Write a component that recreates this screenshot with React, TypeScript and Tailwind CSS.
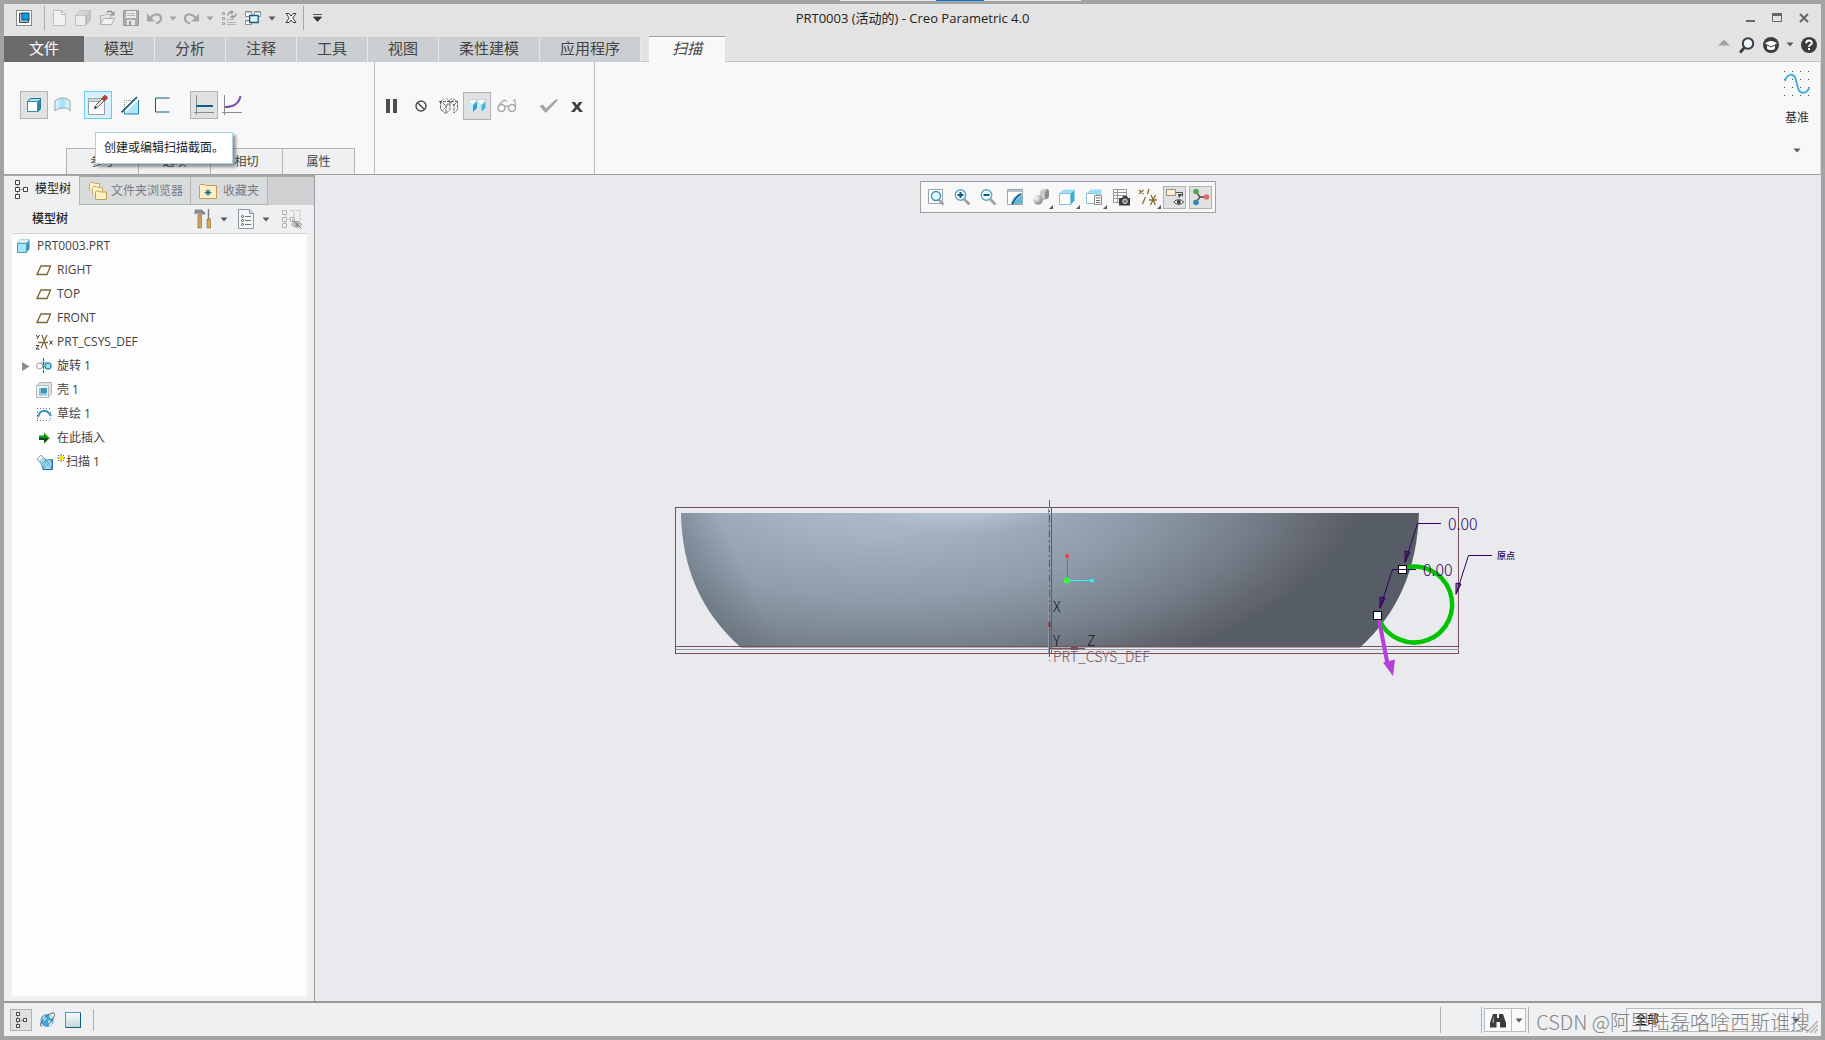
import React, { ReactNode } from 'react';
import clsx from 'clsx';

interface GlyphProps {
  w?: number;
  h?: number;
  children: ReactNode;
}

function Glyph({ w = 16, h = 16, children }: GlyphProps) {
  return (
    <svg width={w} height={h} viewBox={`0 0 ${w} ${h}`} fill="none" className="block shrink-0" aria-hidden="true">
      {children}
    </svg>
  );
}

function Caret({ color = '#5a5a5a' }: { color?: string }) {
  return (
    <Glyph w={8} h={5}>
      <path d="M0.5 0.5h7L4 4.5z" fill={color} />
    </Glyph>
  );
}

/* ---------- quick access icons ---------- */

const LogoIcon = () => (
  <Glyph>
    <rect x=".5" y=".5" width="15" height="15" fill="#fff" stroke="#8a8a8a" />
    <path d="M3.5 3.5h9v9h-9z" fill="#a9c6dc" stroke="#444" />
    <rect x="6" y="3" width="7" height="7" fill="#0b9ae6" stroke="#1a4c70" />
  </Glyph>
);

const NewIcon = () => (
  <Glyph>
    <path d="M2.5.5h8l4 4v11h-12z" fill="#f2f2f2" stroke="#bdbdbd" />
    <path d="M10.500.5v4h4" stroke="#bdbdbd" />
  </Glyph>
);

const PartIcon = () => (
  <Glyph>
    <path d="M6.500.5h9v9l-4 5v-9h-8z" fill="#c4c4c4" stroke="#bababa" />
    <path d="M.5 5.500h10v10H.5z" fill="#ededed" stroke="#c2c2c2" />
    <path d="M.5 5.500l5-5h10l-5 5z" fill="#d4d4d4" stroke="#c2c2c2" />
  </Glyph>
);

const OpenIcon = () => (
  <Glyph>
    <path d="M1.500 14.500v-9h4l1-1h5v4" fill="#e4e4e4" stroke="#b0b0b0" />
    <path d="M1.500 14.500l3-6h11l-3 6z" fill="#f1f1f1" stroke="#b0b0b0" />
    <path d="M8 2.500c2-2 4-1.500 5.500.5" stroke="#909090" strokeWidth="1.400" />
    <path d="M15.500 1v4.500H11z" fill="#909090" />
  </Glyph>
);

const SaveIcon = () => (
  <Glyph>
    <path d="M.5.5h15v15H.5z" fill="#acacac" stroke="#9a9a9a" />
    <path d="M3 1h10v7H3z" fill="#ececec" />
    <path d="M4 3.500h8M4 5.500h8" stroke="#b5b5b5" />
    <path d="M4 10h8v5H4z" fill="#e9e9e9" />
    <path d="M6 11h2v4H6z" fill="#9a9a9a" />
  </Glyph>
);

const UndoIcon = () => (
  <Glyph>
    <path d="M2.500 9C6 3.500 13 3 14 7.500c.5 3-2 5-5 6" stroke="#a6a6a6" strokeWidth="2.200" />
    <path d="M0 3.500v8h8z" fill="#a6a6a6" />
  </Glyph>
);

const RedoIcon = () => (
  <Glyph>
    <path d="M13.500 9C10 3.500 3 3 2 7.500c-.5 3 2 5 5 6" stroke="#a6a6a6" strokeWidth="2.200" />
    <path d="M16 3.500v8H8z" fill="#a6a6a6" />
  </Glyph>
);

const RegenIcon = () => (
  <Glyph>
    <path d="M1.500 2.500h2v2h-2zM1.500 7.500h2v2h-2zM1.500 12.500h2v2h-2z" stroke="#a0a0a0" />
    <path d="M6 9.500h7M6 12.500h9M6 14.500h9" stroke="#b4b4b4" />
    <path d="M7 5.500c0-3 2-3.500 4-3.500M15 3.500c0 3-2 3.500-4 3.500" stroke="#979797" strokeWidth="1.500" />
    <path d="M10 0l3 2-3 2.500zM12 4.500l-3 2.500 3 2z" fill="#979797" />
  </Glyph>
);

const WindowsIcon = () => (
  <Glyph>
    <path d="M.5 1.500h6v5h-6zM9.500 1.500h6v5h-6zM.5 10.500h6v4h-6z" fill="#fff" stroke="#909090" />
    <path d="M.5 2h6M9.500 2h6M.5 11h6" stroke="#8a8a8a" />
    <path d="M4.700 5.500h8.500v7H4.700z" fill="#dff4fc" stroke="#17607f" strokeWidth="1.300" />
  </Glyph>
);

const CloseDocIcon = () => (
  <Glyph w={12} h={12}>
    <path d="M1 1.500h3l2 2.500 2-2.500h3L7.700 6l3.300 4.500H8L6 8l-2 2.500H1L4.300 6z" fill="#fff" stroke="#3a3a3a" />
  </Glyph>
);

/* ---------- dashboard icons ---------- */

const SolidIcon = () => (
  <Glyph>
    <path d="M12 4l3-3v11l-3 3z" fill="#2b86ab" />
    <path d="M1 4l3-3h11l-3 3z" fill="#a9e0f6" />
    <path d="M1.500 4.500h10v10h-10z" fill="#fff" stroke="#3a87a6" />
    <path d="M1.500 4.500l3-3h10v10l-3 3" stroke="#2b7492" />
  </Glyph>
);

const SurfaceIcon = () => (
  <Glyph w={17}>
    <path d="M1 4c4-4 11-4 15 0v10c-2-3-4-3-6-3s-6 0-9 3z" fill="url(#surf)" stroke="#8fa5b0" />
    <defs>
      <linearGradient id="surf">
        <stop stopColor="#e4f7fd" />
        <stop offset=".5" stopColor="#a5ddf3" />
        <stop offset="1" stopColor="#eaf9fe" />
      </linearGradient>
    </defs>
  </Glyph>
);

const SketchIcon = () => (
  <Glyph w={20} h={20}>
    <path d="M.5 3.500h16v16H.5z" fill="#fff" stroke="#9c9c9c" />
    <path d="M.5 3.500h16v3H.5z" fill="#d6d6d6" stroke="#a8a8a8" />
    <path d="M6.500 13.500l2-4 6-6 2 2-6 6z" fill="#e4e4e4" stroke="#5b5b5b" />
    <path d="M6 14l1-3 2 2z" fill="#333" />
    <path d="M13.500 3.500L16 .8c1.500-1 4 1 3 3L16.500 6z" fill="#b5443a" stroke="#7e2c24" strokeWidth=".6" />
  </Glyph>
);

const CutIcon = () => (
  <Glyph w={19} h={19}>
    <path d="M3.500 13V4.500H13" stroke="#8a8a8a" strokeDasharray="1 1" />
    <path d="M17.500 4v14h-14z" fill="#a8e6fb" />
    <path d="M3.500 15v3h14V4" stroke="#2c7fa0" />
    <path d="M.5 16.500L16 1" stroke="#17516b" strokeWidth="1.600" />
  </Glyph>
);

const ThinIcon = () => (
  <Glyph>
    <path d="M15.500 1H1.500v14h14" stroke="#0d5c82" />
  </Glyph>
);

const ConstantIcon = () => (
  <Glyph w={20} h={20}>
    <path d="M2.500 0v20M0 17.500h20" stroke="#8b8b8b" />
    <path d="M2 11h17" stroke="#0d5c82" strokeWidth="2" />
  </Glyph>
);

const VariableIcon = () => (
  <Glyph w={20} h={20}>
    <path d="M2.500 0v20M0 17.500h20" stroke="#8b8b8b" />
    <path d="M3 12c9 0 14-3 15.500-11" stroke="#7e4fae" strokeWidth="2" />
  </Glyph>
);

const PauseIcon = () => (
  <Glyph w={12} h={14}>
    <path d="M1 0h4v14H1zM8 0h4v14H8z" fill="#4d4d4d" />
  </Glyph>
);

const StopIcon = () => (
  <Glyph w={12} h={12}>
    <circle cx="6" cy="6" r="5" stroke="#505050" strokeWidth="1.500" />
    <path d="M2.500 2.500l7 7" stroke="#505050" strokeWidth="1.500" />
  </Glyph>
);

const WireIcon = () => (
  <Glyph w={20} h={16}>
    <path d="M1.500 3.500v8l5.500 4v-8zM7 7.500l4-4v8l-4 4M11 3.500l4 3.500v8M15 7l3.500-3.500v8L15 15M0 3.500h20" stroke="#4a4a4a" strokeWidth=".9" strokeDasharray="3 1" />
    <path d="M2 3L5 .5M7 .5l4 3M9 3.500L13 .5M14 .5l4.500 3M3 13L15 1" stroke="#777" strokeWidth=".7" />
  </Glyph>
);

const AttachedIcon = () => (
  <Glyph w={20} h={14}>
    <path d="M1 2.500l3-2h6L6 6z" fill="#fff" stroke="#a9b8c0" strokeWidth=".6" />
    <path d="M.8 2.500L6 6.500V13L.8 9z" fill="#c9eefb" />
    <path d="M6 6.500l4-4V9l-4 4z" fill="#2d9fd0" />
    <path d="M10 2.500l3-2h6L14.500 6z" fill="#fff" stroke="#a9b8c0" strokeWidth=".6" />
    <path d="M10.500 3l4 3.500V12l-4-3z" fill="#c9eefb" />
    <path d="M14.500 6.500l4-4V9l-4 3.500z" fill="#3fb4e3" />
  </Glyph>
);

const GlassesIcon = () => (
  <Glyph w={20} h={14}>
    <circle cx="4.500" cy="9" r="3.500" stroke="#a8a8a8" strokeWidth="1.500" />
    <circle cx="15" cy="9" r="3.500" stroke="#a8a8a8" strokeWidth="1.500" />
    <path d="M8 8c1-1.500 2.500-1.500 3.500 0M1.200 7.500C3 5 6 1.500 7.500 1.200S9 2 9.500 3M18.500 8.500L18 1l-2 .5" stroke="#a8a8a8" strokeWidth="1.200" />
  </Glyph>
);

const AcceptIcon = () => (
  <Glyph w={20} h={14}>
    <path d="M.5 7L4 5.500l3 4L16.500.5h3L7.500 13.500H6z" fill="#a5a5a5" />
  </Glyph>
);

const CancelIcon = () => (
  <Glyph w={12} h={10}>
    <path d="M.5 0h3.500l2 3 2-3h3.500L8 5l4 5H8.500L6 7l-2.500 3H0l4-5z" fill="#424242" />
  </Glyph>
);

const DatumIcon = () => (
  <Glyph w={26} h={26}>
    {[0, 8, 16, 24].map((y) =>
      [0, 8, 16, 24].map((x) => <rect key={`${x}-${y}`} x={x} y={y} width="1" height="1" fill="#444" />)
    )}
    <path d="M1 10C3 2.500 10 1.500 12 9l2 8c2 7 9 6 11.500-1" stroke="#43b0df" strokeWidth="2" />
  </Glyph>
);

/* ---------- navigator icons ---------- */

const TreeIcon = ({ color = '#3f3f3f' }: { color?: string }) => (
  <Glyph w={14} h={20}>
    <path d="M3.500 5v10M5 10.500h5" stroke="#9a9a9a" />
    <path d="M1.500 1.500h4v4h-4zM1.500 8.500h4v4h-4zM1.500 15.500h4v4h-4zM9.500 8.500h4v4h-4z" fill="#fff" stroke={color} />
  </Glyph>
);

const SmallTreeIcon = () => (
  <Glyph w={12} h={16}>
    <path d="M2.500 4v9M4 8.500h4" stroke="#9a9a9a" />
    <path d="M1.500.5h3v3h-3zM1.500 6.500h3v3h-3zM1.500 12.500h3v3h-3zM8.500 6.500h3v3h-3z" fill="#fff" stroke="#3f3f3f" />
  </Glyph>
);

const FoldersIcon = () => (
  <Glyph w={20} h={20}>
    <path d="M1.500 10V2.500l1-1h3l1 1h5V8" fill="#fff0c8" stroke="#c9a765" />
    <path d="M4.500 14V6.500l1-1h3l1 1h5V12" fill="#fff0c8" stroke="#c9a765" />
    <path d="M7.500 18.500V11l1-1h3l1 1h6v7.500z" fill="#ffefc4" stroke="#c29d57" />
  </Glyph>
);

const FavoritesIcon = () => (
  <Glyph w={18} h={16}>
    <path d="M.5 15.500v-13l1-1h4l1 1h11v13z" fill="#fff0c8" stroke="#c29d57" />
    <path d="M9 6v7M6.500 7l5 5M11.500 7l-5 5M5.500 9.500h7" stroke="#15617f" strokeWidth=".9" />
    <circle cx="9" cy="9.500" r="1.500" fill="#15617f" />
  </Glyph>
);

const ToolsIcon = () => (
  <Glyph w={18} h={20}>
    <path d="M1 1h7l3 3v1H8V4H3L1 5z" fill="#8e959c" stroke="#5d646b" strokeWidth=".6" />
    <path d="M4 5h3.500v14H4z" fill="#cfa05e" stroke="#8d6630" strokeWidth=".6" />
    <path d="M14.500 0v10" stroke="#7b7b7b" strokeWidth="1.400" />
    <path d="M13 10h3.500v9H13z" fill="#dba74f" stroke="#8d6630" strokeWidth=".6" />
  </Glyph>
);

const SettingsListIcon = () => (
  <Glyph w={16} h={20}>
    <path d="M.5.5h11l4 4v15H.5z" fill="#f2f7f8" stroke="#8d979b" />
    <path d="M11.500.5v4h4" fill="#d0dadd" stroke="#8d979b" />
    <path d="M7 7.500h6M7 11.500h6M7 15.500h6" stroke="#777" />
    <circle cx="4.500" cy="7.500" r="1" stroke="#555" />
    <circle cx="4.500" cy="11.500" r="1" stroke="#555" />
    <circle cx="4.500" cy="15.500" r="1" stroke="#555" />
  </Glyph>
);

const HideTreeIcon = () => (
  <Glyph w={20} h={20}>
    <path d="M3 5v10M5 10h8M8 1.500h4v8M14 1.500h4v10" stroke="#c8c8c8" />
    <path d="M.5 1.500h4v4h-4zM.5 8.500h4v4h-4zM.5 14.500h4v4h-4zM8.500 8.500h4v4h-4z" fill="#eef0f2" stroke="#b5b5b5" />
    <path d="M10 15.500c2.500-4 7-4 9.500 0-2.500 3.500-7 3.500-9.500 0z" fill="#d6d6d6" stroke="#8c8c8c" />
    <circle cx="15" cy="15.500" r="1.800" fill="#8c8c8c" />
    <path d="M10 10.500l9.500 9" stroke="#7e7e7e" />
  </Glyph>
);

const RootIcon = () => (
  <Glyph>
    <path d="M10.500 5l3-3.500V11l-3 3.500z" fill="#2b93c4" />
    <path d="M1.500 5L4 1.500h9.500l-3 3.500z" fill="#dff5fd" stroke="#8fb8c8" strokeWidth=".6" />
    <path d="M1.500 5.500h9v9h-9z" fill="#a6e6fb" stroke="#4e9cbb" />
  </Glyph>
);

const PlaneIcon = () => (
  <Glyph>
    <path d="M5 4h9.500L11 12.500H1z" stroke="#7a6534" strokeWidth="1.300" />
  </Glyph>
);

const CsysIcon = () => (
  <Glyph w={17}>
    <path d="M2 8.500h10M6 1l5 14M11 1L5 14" stroke="#856c38" strokeWidth="1.300" />
    <path d="M0 1l1.500 2M3.500 1L1 5M0 11.500h3L0 15h3.500M13.500 6.500l3 4M16.500 6.500l-3 4" stroke="#333" />
  </Glyph>
);

const RevolveIcon = () => (
  <Glyph>
    <path d="M3 5c2-3 8-3 9 0v3H3z" fill="#b9d9e6" />
    <circle cx="3.500" cy="8" r="3" fill="#fff" stroke="#9c9c9c" />
    <circle cx="12" cy="8" r="3" fill="#a4e0f6" stroke="#3294bd" strokeWidth="1.400" />
    <path d="M7.500 0v16" stroke="#4d4d4d" strokeDasharray="3 1" />
  </Glyph>
);

const ShellIcon = () => (
  <Glyph>
    <path d="M.5 4l3-3.500h12v11l-3 4H.5z" fill="#dfe5e8" stroke="#aab3b7" />
    <path d="M.5 3.500h12v12H.5z" fill="#f0f4f5" stroke="#b5bcc0" />
    <path d="M3 6h8v7.500H3z" fill="#8cc8e0" />
    <path d="M5 6h6v5H5z" fill="#3e94b8" />
  </Glyph>
);

const CurveIcon = () => (
  <Glyph>
    <path d="M1 2.500h14M1 14.500h14M1.500 6v8M14.500 6v8" stroke="#777" strokeDasharray="1 2" />
    <path d="M2 11c2-8 9-8 13-1" stroke="#2c8ebb" strokeWidth="2" />
  </Glyph>
);

const InsertIcon = () => (
  <Glyph>
    <path d="M3 5.500h5V2.500l5.500 5.500L8 13.500V10H3z" fill="#0b9b12" />
    <path d="M3 8h10.500L8 13.500V10H3z" fill="#1e4420" />
    <path d="M8.500 3l5 5-5 5" stroke="#8ade3a" strokeWidth=".6" />
  </Glyph>
);

const SweepIcon = () => (
  <Glyph w={17}>
    <path d="M1 5l4-4 5 5 6.500-.5v10H7L5.500 10z" fill="#a7def2" stroke="#3f89a8" />
    <path d="M1 5l4-4 2.500 3L3.500 8z" fill="#f2f5f6" stroke="#aaa" />
    <path d="M16 5.500L7 15.500M16 15.500l-6-9.500-4.500 4M10 6L7 15" stroke="#4d99b8" strokeWidth=".8" />
    <path d="M16 6v9.500H7" stroke="#1b6688" />
  </Glyph>
);

/* ---------- graphics toolbar icons ---------- */

const RefitIcon = () => (
  <Glyph w={17} h={17}>
    <path d="M.5.5h14v14H.5z" fill="#fff" stroke="#9aa5aa" />
    <path d="M11 11l4.500 4.500" stroke="#a3a3a3" strokeWidth="2.500" />
    <circle cx="8" cy="7" r="4.500" fill="#e6f7fd" stroke="#3e8fb0" strokeWidth="1.400" />
  </Glyph>
);

const ZoomIcon = ({ plus = false }: { plus?: boolean }) => (
  <Glyph w={17} h={17}>
    <path d="M10 10l5.500 5.500" stroke="#a3a3a3" strokeWidth="2.800" />
    <circle cx="6.500" cy="6" r="5.200" fill="#f1fbfe" stroke="#5ca4c0" strokeWidth="1.400" />
    <path d="M3.500 6h6" stroke="#0d5c82" strokeWidth="2" />
    {plus && <path d="M6.500 3v6" stroke="#0d5c82" strokeWidth="2" />}
  </Glyph>
);

const RepaintIcon = () => (
  <Glyph>
    <path d="M.5.5h15v15H.5z" fill="#8fd6f1" stroke="#9aa9b0" />
    <path d="M1 3h14v1C9 5 5 9 4 15H1z" fill="#fff" />
    <path d="M1 1h14v2H1z" fill="#b8c3c8" />
    <path d="M15 6v9H5z" fill="#5db9dd" />
    <path d="M14 5c-4 1-6 5-9 10" stroke="#1b526b" strokeWidth="1.600" />
  </Glyph>
);

const ShadingIcon = () => (
  <Glyph>
    <defs>
      <radialGradient id="ball" cx=".3" cy=".3" r=".8">
        <stop stopColor="#fff" />
        <stop offset="1" stopColor="#7c7c7c" />
      </radialGradient>
    </defs>
    <path d="M7 3l4-3h4l1 2v6l-2 2-6 1z" fill="#8a8a8a" />
    <path d="M7 3l4-3h3l-2 4v7l-5-1z" fill="#c9c9c9" />
    <circle cx="5" cy="11" r="4.700" fill="url(#ball)" />
  </Glyph>
);

const OrientIcon = () => (
  <Glyph>
    <path d="M12 4l3.500-3.500v11L12 15.500z" fill="#3aa9d8" />
    <path d="M.5 4l4-3.500h11L12 4z" fill="#9fe0f7" />
    <path d="M.5 4.500h11v11H.5z" fill="#fff" stroke="#7dc0da" />
  </Glyph>
);

const ManagerIcon = () => (
  <Glyph>
    <path d="M.5 4.500l4-4h11v6H11" fill="#9adcf5" />
    <path d="M.5 4.500h10v10H.5z" fill="#fff" stroke="#8cc3d8" />
    <path d="M8.500 6.500h7v9h-7z" fill="#fff" stroke="#8c8c8c" />
    <path d="M10 9h4M10 11.500h4M10 13.500h4" stroke="#666" />
  </Glyph>
);

const CameraIcon = () => (
  <Glyph w={17} h={17}>
    <path d="M.5.5h13v13H.5zM.5 3.500h13M.5 6.500h13M.5 9.500h13M4.500.5v13" fill="#fff" stroke="#979797" />
    <path d="M6 9h3l1-2h4l1 2h2v7.500H6z" fill="#3e3e3e" />
    <circle cx="12" cy="12.300" r="2.300" fill="#777" stroke="#ddd" />
  </Glyph>
);

const DatumDisplayIcon = () => (
  <Glyph w={18} h={17}>
    <path d="M0 1l4.500 4M4.500 1L0 5M10 0L8.500 5M6.500 8L3.500 15M10 11h8M12 6l4.500 10M16.500 6l-5 10" stroke="#8a6b2e" strokeWidth="1.300" />
  </Glyph>
);

const AnnotationIcon = () => (
  <Glyph w={18} h={18}>
    <path d="M.5 1.500h9v6h-9z" fill="#fff1cf" stroke="#8f8f8f" />
    <path d="M10 4.500h6.500v4" stroke="#555" />
    <path d="M12 6h4.500l-3.500 4z" fill="#444" />
    <path d="M8 14c2-3 7.500-3 9.500 0-2 3-7.500 3-9.500 0z" fill="#fff" stroke="#3f3f3f" />
    <circle cx="12.800" cy="14" r="2" fill="#3f3f3f" />
  </Glyph>
);

const SpinCenterIcon = () => (
  <Glyph w={18} h={18}>
    <path d="M4 4l4 5-4 5M8 9h7" stroke="#444" strokeWidth="1.300" />
    <circle cx="4" cy="3.500" r="2.800" fill="#55a451" />
    <circle cx="4" cy="14.500" r="2.800" fill="#3587b2" />
    <circle cx="14.500" cy="9" r="2.800" fill="#e0706c" />
  </Glyph>
);

/* ---------- building blocks ---------- */

interface ToolButtonProps {
  label: string;
  className?: string;
  children: ReactNode;
}

function ToolButton({ label, className, children }: ToolButtonProps) {
  return (
    <button type="button" aria-label={label} className={clsx('flex shrink-0 items-center justify-center', className)}>
      {children}
    </button>
  );
}

const pressed = 'border border-[#b2b2b4] bg-[#e0e1e3]';

function TitleBar() {
  return (
    <header className="grid h-8 grid-cols-[1fr_auto_1fr] items-center pb-1">
      <div className="flex h-6 items-center">
        <ToolButton label="Creo" className="ml-3"><LogoIcon /></ToolButton>
        <span className="mr-[2px] ml-3 h-6 w-px bg-[#a8a8a8]" />
        <ToolButton label="新建" className="w-6"><NewIcon /></ToolButton>
        <ToolButton label="零件" className="w-6"><PartIcon /></ToolButton>
        <ToolButton label="打开" className="w-6"><OpenIcon /></ToolButton>
        <ToolButton label="保存" className="w-6"><SaveIcon /></ToolButton>
        <ToolButton label="撤消" className="w-6"><UndoIcon /></ToolButton>
        <ToolButton label="撤消列表" className="w-3"><Caret color="#a0a0a0" /></ToolButton>
        <ToolButton label="重做" className="w-6"><RedoIcon /></ToolButton>
        <ToolButton label="重做列表" className="w-[14px]"><Caret color="#a0a0a0" /></ToolButton>
        <ToolButton label="重新生成" className="w-6"><RegenIcon /></ToolButton>
        <ToolButton label="窗口" className="w-6"><WindowsIcon /></ToolButton>
        <ToolButton label="窗口列表" className="w-[14px]"><Caret /></ToolButton>
        <ToolButton label="关闭" className="w-6"><CloseDocIcon /></ToolButton>
        <span className="mr-[6px] h-6 w-px bg-[#a8a8a8]" />
        <ToolButton label="自定义" className="w-[14px]">
          <Glyph w={9} h={8}>
            <path d="M0 .5h9M.5 3h8L4.500 7.500z" stroke="#333" fill="#333" strokeWidth=".8" />
          </Glyph>
        </ToolButton>
      </div>
      <h1 className="text-[13px] leading-5 text-[#222]">PRT0003 (活动的) - Creo Parametric 4.0</h1>
      <div className="flex items-center justify-end gap-4 pr-3">
        <ToolButton label="最小化">
          <Glyph w={10} h={12}><path d="M0 9h9" stroke="#666" strokeWidth="2" /></Glyph>
        </ToolButton>
        <ToolButton label="最大化">
          <Glyph w={11} h={10}>
            <path d="M.5.5h9v8h-9z" stroke="#666" />
            <path d="M0 0h10v3H0z" fill="#666" />
          </Glyph>
        </ToolButton>
        <ToolButton label="关闭窗口">
          <Glyph w={10} h={10}><path d="M1 1l8 8M9 1L1 9" stroke="#666" strokeWidth="2" /></Glyph>
        </ToolButton>
      </div>
    </header>
  );
}

const ribbonTabs = ['模型', '分析', '注释', '工具', '视图', '柔性建模', '应用程序'];

function RibbonTabs() {
  return (
    <nav className="flex h-[26px] items-stretch text-[15px] leading-5 text-[#444]">
      <button type="button" className="bg-[#6a6a6a] px-[25px] pb-[3px] text-white">文件</button>
      {ribbonTabs.map((tab) => (
        <button key={tab} type="button" className="mt-px border-r border-[#e6e8ea] bg-[#cbcfd2] px-5 pb-1">{tab}</button>
      ))}
      <span className="w-2 border-b border-[#c3c3c3]" />
      <button type="button" className="border-t border-[#a0a0a0] bg-[#f8f8f8] px-[23px] pb-1 italic">扫描</button>
      <div className="flex flex-1 items-start justify-end border-b border-[#c3c3c3] pr-1">
        <ToolButton label="最小化功能区" className="mr-[9px] h-3 w-3">
          <Glyph w={12} h={7}><path d="M0 6.500L6 .5l6 6z" fill="#a3a3a3" /></Glyph>
        </ToolButton>
        <ToolButton label="搜索" className="mr-2 pt-px">
          <Glyph w={16} h={17}>
            <circle cx="9" cy="6.500" r="5.200" fill="#eef6fa" stroke="#3d3d3d" strokeWidth="2" />
            <path d="M1 15.500l4.500-5" stroke="#3d3d3d" strokeWidth="2.800" />
          </Glyph>
        </ToolButton>
        <ToolButton label="学习连接器" className="pt-px">
          <Glyph w={16} h={16}>
            <circle cx="8" cy="8" r="8" fill="#3d3d3d" />
            <path d="M2 6.500C5 3 11 3 14 6.500L8 9.500z" fill="#fff" />
            <path d="M4 8.500v3c2 2 6 2 8 0v-3l-4 2z" fill="#fff" />
          </Glyph>
        </ToolButton>
        <ToolButton label="学习连接器列表" className="mx-[7px] h-4"><Caret /></ToolButton>
        <ToolButton label="帮助" className="pt-px">
          <Glyph>
            <circle cx="8" cy="8" r="8" fill="#3d3d3d" />
            <path d="M5.200 6.200c0-3.600 5.600-3.400 5.600-.3C10.800 7.800 8 7.800 8 9.800" stroke="#fff" strokeWidth="2" />
            <rect x="7" y="11" width="2" height="2" fill="#fff" />
          </Glyph>
        </ToolButton>
      </div>
    </nav>
  );
}

function Ribbon() {
  return (
    <section className="flex h-28 border-r border-[#d5d8db] bg-[#f8f8f8]">
      <div className="relative flex w-[371px] flex-col justify-between border-r border-[#bcbcbc] pt-[29px] pl-4">
        <div className="flex items-center">
          <ToolButton label="实体" className={clsx('size-7', pressed)}><SolidIcon /></ToolButton>
          <ToolButton label="曲面" className="size-7"><SurfaceIcon /></ToolButton>
          <ToolButton label="草绘" className="ml-2 size-7 border border-[#6bcbf2] bg-[#d5f2fd]"><SketchIcon /></ToolButton>
          <ToolButton label="移除材料" className="ml-1 size-7"><CutIcon /></ToolButton>
          <ToolButton label="薄板" className="ml-1 size-7"><ThinIcon /></ToolButton>
          <ToolButton label="恒定截面" className={clsx('ml-[14px] size-7', pressed)}><ConstantIcon /></ToolButton>
          <ToolButton label="可变截面" className="size-7"><VariableIcon /></ToolButton>
        </div>
        <div className="ml-[46px] flex text-xs text-[#444]">
          {['参考', '选项', '相切', '属性'].map((tab) => (
            <button key={tab} type="button" className="-mr-px h-[26px] w-[73px] border border-b-0 border-[#b4b4b4] bg-[#eff0f2]">{tab}</button>
          ))}
        </div>
        <div role="tooltip" className="absolute top-[70px] left-[91px] h-8 border border-[#a9d3e6] bg-white px-2 text-xs leading-[30px] whitespace-nowrap text-[#222] shadow-[3px_3px_3px_rgba(0,0,0,0.4)]">
          创建或编辑扫描截面。
        </div>
      </div>
      <div className="flex w-[220px] items-start border-r border-[#bcbcbc] pt-[30px] pl-[3px]">
        <ToolButton label="暂停" className="h-7 w-[26px]"><PauseIcon /></ToolButton>
        <ToolButton label="无预览" className="ml-[3px] size-7"><StopIcon /></ToolButton>
        <ToolButton label="分离" className="size-7"><WireIcon /></ToolButton>
        <ToolButton label="连接" className={clsx('size-7', pressed)}><AttachedIcon /></ToolButton>
        <ToolButton label="校验" className="ml-[2px] size-7"><GlassesIcon /></ToolButton>
        <ToolButton label="确定" className="ml-[14px] size-7"><AcceptIcon /></ToolButton>
        <ToolButton label="取消" className="mt-px size-7"><CancelIcon /></ToolButton>
      </div>
      <div className="flex flex-1 justify-end pr-[10px]">
        <button type="button" className="flex flex-col items-center pt-[9px] text-xs leading-4 text-[#333]">
          <DatumIcon />
          <span className="mt-[13px]">基准</span>
          <span className="mt-[22px]"><Caret /></span>
        </button>
      </div>
    </section>
  );
}

interface TreeNode {
  name: string;
  icon: ReactNode;
  expandable?: boolean;
  active?: boolean;
}

const treeNodes: TreeNode[] = [
  { name: 'RIGHT', icon: <PlaneIcon /> },
  { name: 'TOP', icon: <PlaneIcon /> },
  { name: 'FRONT', icon: <PlaneIcon /> },
  { name: 'PRT_CSYS_DEF', icon: <CsysIcon /> },
  { name: '旋转 1', icon: <RevolveIcon />, expandable: true },
  { name: '壳 1', icon: <ShellIcon /> },
  { name: '草绘 1', icon: <CurveIcon /> },
  { name: '在此插入', icon: <InsertIcon /> },
  { name: '扫描 1', icon: <SweepIcon />, active: true }
];

function Navigator() {
  return (
    <aside className="flex w-[311px] shrink-0 flex-col border-r border-[#9c9c9e] bg-[#eef0f2] text-xs text-[#444]">
      <div className="flex h-[30px] items-stretch border-t-2 border-[#a8a8a8] bg-[#d0d0d2]">
        <button type="button" className="-mt-px flex w-[75px] items-center gap-[7px] bg-[#eef0f2] pb-1 pl-[10px] text-[#222]">
          <TreeIcon />模型树
        </button>
        <button type="button" className="flex w-28 items-center gap-[3px] border-x border-b border-[#b3b5b7] bg-[#d9dcdd] pl-2 text-[#777b82]">
          <FoldersIcon />文件夹浏览器
        </button>
        <button type="button" className="flex w-[77px] items-center gap-[6px] border-r border-b border-[#b3b5b7] bg-[#d9dcdd] pl-2 text-[#777b82]">
          <FavoritesIcon />收藏夹
        </button>
      </div>
      <div className="flex h-7 items-center pr-3 pl-7">
        <h2 className="flex-1 font-medium text-[#222]">模型树</h2>
        <ToolButton label="工具"><ToolsIcon /></ToolButton>
        <ToolButton label="工具列表" className="ml-[6px] w-3"><Caret /></ToolButton>
        <ToolButton label="设置" className="ml-2"><SettingsListIcon /></ToolButton>
        <ToolButton label="设置列表" className="ml-[6px] w-3"><Caret /></ToolButton>
        <ToolButton label="显示" className="ml-[10px]"><HideTreeIcon /></ToolButton>
      </div>
      <ul className="mr-[7px] mb-[5px] ml-2 flex-1 border-t border-[#d0d2d4] bg-[#fdfdfd] pl-1">
        <li className="flex h-6 items-center gap-[5px]"><RootIcon />PRT0003.PRT</li>
        {treeNodes.map((node) => (
          <li key={node.name} className="flex h-6 items-center">
            <span className="w-5 pl-[6px]">
              {node.expandable && <Glyph w={8} h={9}><path d="M0 0l7.500 4.500L0 9z" fill="#8c8c8c" /></Glyph>}
            </span>
            <span className="w-[21px]">{node.icon}</span>
            {node.active && (
              <span className="mr-px self-start pt-1">
                <Glyph w={8} h={8}>
                  <path d="M4 0v8M0 4h8M1 1l6 6M7 1L1 7" stroke="#555" strokeWidth=".9" />
                  <path d="M2 2h4v4H2z" fill="#f6ee00" />
                </Glyph>
              </span>
            )}
            {node.name}
          </li>
        ))}
      </ul>
    </aside>
  );
}

const CornerMark = () => (
  <svg width="4" height="4" viewBox="0 0 4 4" className="absolute right-[-1px] bottom-0" aria-hidden="true">
    <path d="M4 0v4H0z" fill="#555" />
  </svg>
);

function GraphicsToolbar() {
  return (
    <div className="relative mx-auto mt-[6px] flex h-8 w-fit items-center gap-[3px] border border-[#a0a0a0] bg-[#f8f8f8] pr-[3px] pl-1">
      <ToolButton label="重新调整" className="h-6 w-[23px]"><RefitIcon /></ToolButton>
      <ToolButton label="放大" className="h-6 w-[23px]"><ZoomIcon plus /></ToolButton>
      <ToolButton label="缩小" className="h-6 w-[23px]"><ZoomIcon /></ToolButton>
      <ToolButton label="重画" className="h-6 w-[23px]"><RepaintIcon /></ToolButton>
      <ToolButton label="显示样式" className="relative h-6 w-[23px]"><ShadingIcon /><CornerMark /></ToolButton>
      <ToolButton label="已保存方向" className="relative size-6"><OrientIcon /><CornerMark /></ToolButton>
      <ToolButton label="视图管理器" className="relative size-6"><ManagerIcon /><CornerMark /></ToolButton>
      <ToolButton label="透视图" className="size-6"><CameraIcon /></ToolButton>
      <ToolButton label="基准显示" className="relative size-6"><DatumDisplayIcon /><CornerMark /></ToolButton>
      <ToolButton label="注释显示" className={clsx('size-[23px]', pressed)}><AnnotationIcon /></ToolButton>
      <ToolButton label="旋转中心" className={clsx('size-[23px]', pressed)}><SpinCenterIcon /></ToolButton>
    </div>
  );
}

// Model space: swept bowl, datum planes, dimension leaders and drag handles
function ModelScene() {
  const bowl = 'M681 513C682 568 701 612 741 647.500H1360C1399 612 1417 568 1419 513z';
  return (
    <svg viewBox="315 175 1506 826" className="absolute inset-0 size-full" aria-label="PRT0003">
      <defs>
        <radialGradient id="shade" gradientUnits="userSpaceOnUse" cx="0" cy="0" r="1" gradientTransform="translate(880 484) scale(500 220)">
          <stop offset="0" stopColor="#aab9ca" />
          <stop offset=".2" stopColor="#a7b5c6" />
          <stop offset=".4" stopColor="#98a5b5" />
          <stop offset=".52" stopColor="#909cab" />
          <stop offset=".64" stopColor="#828e98" />
          <stop offset=".78" stopColor="#727c86" />
          <stop offset=".9" stopColor="#62666f" />
          <stop offset=".97" stopColor="#575d66" />
        </radialGradient>
        <linearGradient id="rim" gradientUnits="userSpaceOnUse" x1="690" y1="590" x2="742" y2="566">
          <stop stopColor="#5f6a74" stopOpacity=".55" />
          <stop offset="1" stopColor="#5f6a74" stopOpacity="0" />
        </linearGradient>
        <radialGradient id="shine" gradientUnits="userSpaceOnUse" cx="0" cy="0" r="1" gradientTransform="translate(960 508) scale(110 24)">
          <stop stopColor="#bccbdb" stopOpacity=".9" />
          <stop offset="1" stopColor="#b6c5d5" stopOpacity="0" />
        </radialGradient>
      </defs>

      <path d={bowl} fill="url(#shade)" />
      <path d={bowl} fill="url(#rim)" />
      <path d={bowl} fill="url(#shine)" />

      <g fill="none" stroke="#7a5058" shapeRendering="crispEdges">
        <path d="M675.500 507.500h783v146h-783zM675.500 646.500h783M1051.500 507.500v146" />
        <path d="M1048.500 507v146M675.500 649.500h783" stroke="#9697a8" />
        <path d="M1049.500 500v161" strokeDasharray="7 3 2 3" />
        <path d="M1049.500 620v32M1050 648.500h35" />
      </g>
      <path d="M1048 622h4v5h-4zM1071 646h7v4h-7z" fill="#7a5058" />

      <g strokeWidth="1" fill="none">
        <path d="M1067.500 556v25" stroke="#ef3b3b" />
        <path d="M1067 580.500h25" stroke="#33f0ff" />
      </g>
      <circle cx="1067" cy="556" r="2" fill="#ff3838" />
      <circle cx="1092" cy="580.500" r="2" fill="#33f0ff" />
      <circle cx="1067" cy="580.500" r="3" fill="#30ff30" />

      <g className="font-['Noto_Sans_CJK_SC',sans-serif] text-[14px] font-light">
        <g fill="#111">
          <text x="1053" y="612">X</text>
          <text x="1053" y="646">Y</text>
          <text x="1087" y="646">Z</text>
        </g>
        <text x="1053" y="662" fill="#7a5058">PRT_CSYS_DEF</text>
      </g>

      <path d="M1402 568.500A38 38 0 1 1 1379 619" fill="none" stroke="#00c400" strokeWidth="4.500" />

      <g stroke="#36005e" fill="none">
        <path d="M1441 523.500h-23.500l-12.500 39M1416 569.500h-23.500l-12.500 39M1492 555.500h-23.500l-12.500 39" />
        <path d="M1405 562l0-11 5 1zM1380 608l0-11 5 1zM1456 594l0-11 5 1z" fill="#36005e" fillOpacity=".5" />
      </g>
      <g fill="#36005e" className="font-['Noto_Sans_CJK_SC',sans-serif] text-[16px] font-light">
        <text x="1448" y="530">0.00</text>
        <text x="1423" y="576">0.00</text>
      </g>
      <text x="1497" y="559" fill="#36005e" className="text-[9px] font-medium">原点</text>

      <path d="M1378.500 617l9 47" stroke="#b53fd8" strokeWidth="4" />
      <path d="M1383 662.500l12-3-2 16.500z" fill="#b53fd8" />
      <g fill="#fff" stroke="#000">
        <rect x="1398.500" y="565.500" width="8" height="8" />
        <rect x="1373.500" y="611.500" width="8" height="8" />
      </g>
      <path d="M1399 569.500h8" stroke="#36005e" />
    </svg>
  );
}

function StatusBar() {
  return (
    <footer className="relative flex h-[35px] items-center border-t-2 border-[#98999b] bg-[#eef0f2] pt-px text-xs">
      <ToolButton label="导航器" className={clsx('ml-[6px] size-[22px]', pressed)}><SmallTreeIcon /></ToolButton>
      <ToolButton label="浏览器" className="ml-[7px]">
        <Glyph>
          <circle cx="8" cy="8.500" r="6.500" fill="#45a8d6" />
          <path d="M4 5c2-2 4 0 3 2s-3 1-4 3zM9 9c2-1 4 0 4 2s-2 3-3 3zM10 3c2 0 3 2 4 4l-3-1z" fill="#d4eef8" />
          <path d="M3 14.500C-2.500 14 8 1 14.500 1c3.500 1-2 9-6 12" stroke="#5c5c5c" />
        </Glyph>
      </ToolButton>
      <ToolButton label="全屏" className="mr-3 ml-[10px]">
        <Glyph>
          <defs>
            <linearGradient id="pane" x2="0" y2="1">
              <stop stopColor="#fbfdfe" />
              <stop offset="1" stopColor="#c3d6dd" />
            </linearGradient>
          </defs>
          <rect x=".5" y=".5" width="15" height="15" fill="url(#pane)" stroke="#4c9dbb" />
          <path d="M15.500 1v14.500H1" stroke="#0d5c82" />
        </Glyph>
      </ToolButton>
      <span className="h-[22px] w-px bg-[#b0b0b2]" />
      <span className="flex-1" />
      <span className="h-[26px] w-px bg-[#b0b0b2]" />
      <span className="ml-10 h-[26px] w-px bg-[#b0b0b2]" />
      <div className="ml-[2px] flex h-6 w-[42px] border border-[#b6bdc4] bg-[#fafafa]">
        <ToolButton label="查找" className="w-[27px] border-r border-[#b6bdc4]">
          <Glyph w={16} h={15}>
            <path d="M3 1h4v4h2V1h4l3 9v4.500h-6V9H6.500v5.500H0V10z" fill="#3c3c3c" />
            <path d="M2 9l2-6v7z" fill="#999" />
          </Glyph>
        </ToolButton>
        <ToolButton label="查找列表" className="flex-1"><Caret /></ToolButton>
      </div>
      <span className="ml-[2px] h-[26px] w-px bg-[#b0b0b2]" />
      <div className="relative ml-[97px] flex h-6 w-[177px] items-center">
        <select aria-label="选择过滤器" defaultValue="全部" className="h-6 w-full appearance-none border border-[#b6b8ba] bg-[#f5f6f7] pl-2 text-xs font-medium text-[#222]">
          <option>全部</option>
        </select>
        <span className="pointer-events-none absolute right-0 flex h-6 w-4 items-center justify-center border-l border-[#b6b8ba]"><Caret /></span>
      </div>
      <span className="ml-[3px] flex h-full items-end pr-[3px] pb-[3px]">
        <Glyph w={12} h={12}>
          <path d="M0 12L12 0M4 12l8-8M8 12l4-4" stroke="#b4b4b4" strokeWidth="1.500" />
        </Glyph>
      </span>
      <p className="pointer-events-none absolute right-[11px] bottom-0 font-['Noto_Sans_CJK_SC',sans-serif] text-[20px] leading-7 font-light whitespace-nowrap text-[#858585]">
        CSDN @阿里陆磊咯啥西斯谁搜
      </p>
    </footer>
  );
}

export default function App() {
  return (
    <div className="flex h-screen flex-col overflow-hidden bg-[#a3a3a3] font-['Open_Sans','Noto_Sans_CJK_SC',sans-serif]">
      <div className="h-1 shrink-0">
        <div className="ml-[46%] flex h-px w-[241px] justify-center bg-[#e8eaec]">
          <span className="mr-[1px] h-px w-12 bg-[#0b78d8]" />
        </div>
      </div>
      <div className="mx-1 mb-1 flex min-h-0 flex-1 flex-col bg-[#e3e3e3]">
        <TitleBar />
        <RibbonTabs />
        <Ribbon />
        <div className="flex min-h-0 flex-1 border-t border-[#a0a0a2]">
          <Navigator />
          <main className="relative min-w-0 flex-1 overflow-hidden bg-[#e8eaee]">
            <ModelScene />
            <GraphicsToolbar />
          </main>
        </div>
        <StatusBar />
      </div>
    </div>
  );
}
